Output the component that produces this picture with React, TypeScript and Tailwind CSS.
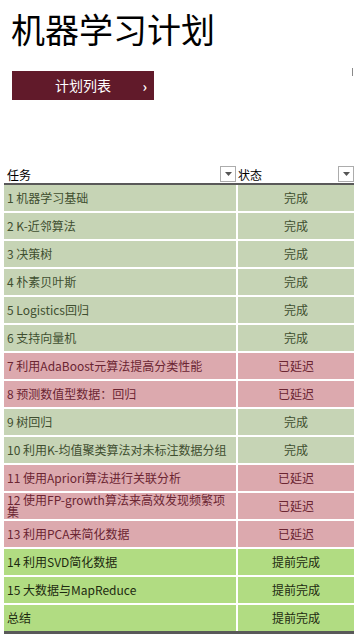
const font = { fontFamily: '"Noto Sans CJK SC", "Noto Sans", sans-serif' }

type Status = 'done' | 'late' | 'early'

const rows: { task: string; status: Status }[] = [
  { task: '1 机器学习基础', status: 'done' },
  { task: '2 K-近邻算法', status: 'done' },
  { task: '3 决策树', status: 'done' },
  { task: '4 朴素贝叶斯', status: 'done' },
  { task: '5 Logistics回归', status: 'done' },
  { task: '6 支持向量机', status: 'done' },
  { task: '7 利用AdaBoost元算法提高分类性能', status: 'late' },
  { task: '8 预测数值型数据：回归', status: 'late' },
  { task: '9 树回归', status: 'done' },
  { task: '10 利用K-均值聚类算法对未标注数据分组', status: 'done' },
  { task: '11 使用Apriori算法进行关联分析', status: 'late' },
  { task: '12 使用FP-growth算法来高效发现频繁项集', status: 'late' },
  { task: '13 利用PCA来简化数据', status: 'late' },
  { task: '14 利用SVD简化数据', status: 'early' },
  { task: '15 大数据与MapReduce', status: 'early' },
  { task: '总结', status: 'early' },
]

const styles: Record<Status, { cell: string; label: string }> = {
  done: { cell: 'bg-[#c6d4b5] text-[#3f4f30]', label: '完成' },
  late: { cell: 'bg-[#dca9ae] text-[#6b2532]', label: '已延迟' },
  early: { cell: 'bg-[#b1dc82] text-[#1d2a10]', label: '提前完成' },
}

function FilterButton() {
  return (
    <div className="w-[16px] h-[16px] border border-[#acacac] bg-white flex items-center justify-center shrink-0">
      <svg width="7" height="4" viewBox="0 0 7 4">
        <path d="M0 0 L7 0 L3.5 4 Z" fill="#555" />
      </svg>
    </div>
  )
}

export default function App() {
  return (
    <div className="relative w-[354px] h-[639px] bg-white overflow-hidden" style={font}>
      <div className="pl-[11px] pt-[10px] text-[34px] leading-[38px] text-black">机器学习计划</div>

      <div className="ml-[12px] mt-[23px] w-[142px] h-[29px] bg-[#611a2a] flex items-center text-white">
        <span className="pl-[43px] text-[14px]">计划列表</span>
        <span className="ml-auto mr-[7px] text-[14px] font-bold leading-none">›</span>
      </div>

      <div className="absolute left-[352px] top-[68px] w-[1px] h-[8px] bg-[#8a8a8a]" />

      <div className="ml-[4px] mt-[66px] w-[350px] text-[12px]">
        <div className="flex gap-[2px] h-[19px] border-b-2 border-[#595959] text-black">
          <div className="w-[232px] flex items-end justify-between pl-[3px] pb-[1px]">
            <span className="leading-[15px]">任务</span>
            <FilterButton />
          </div>
          <div className="flex-1 flex items-end justify-between pb-[1px]">
            <span className="leading-[15px]">状态</span>
            <FilterButton />
          </div>
        </div>

        <div className="flex flex-col gap-[2px] border-b-[3px] border-[#595959]">
          {rows.map((r) => {
            const s = styles[r.status]
            return (
              <div key={r.task} className="flex gap-[2px] h-[26px]">
                <div className={`w-[232px] pl-[3px] pr-[4px] flex items-center leading-[12px] ${s.cell}`}>
                  <span>{r.task}</span>
                </div>
                <div className={`flex-1 flex items-center justify-center ${s.cell}`}>{s.label}</div>
              </div>
            )
          })}
        </div>
      </div>
    </div>
  )
}
